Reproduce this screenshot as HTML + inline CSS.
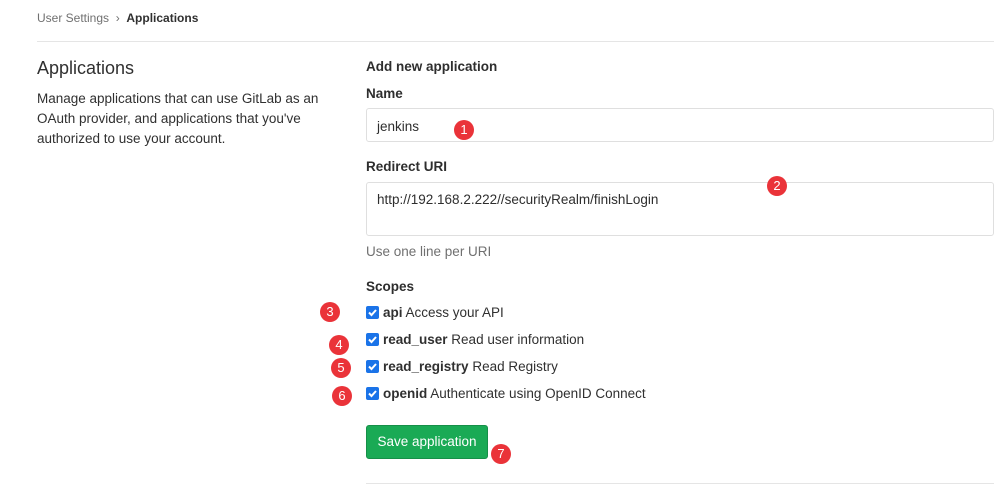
<!DOCTYPE html>
<html><head><style>
body{margin:0;width:1001px;height:497px;background:#fff;font-family:"Liberation Sans",sans-serif;color:#2e2e2e;position:relative;overflow:hidden}
.a{position:absolute;white-space:nowrap}
.b{position:absolute;width:20px;height:20px;border-radius:50%;background:#ea3339;color:#fff;font-size:13px;text-align:center;line-height:20px}
.cb{position:absolute;left:366px;width:13px;height:13px;background:#1a73e8;border-radius:2px}
.cb svg{position:absolute;left:0;top:0}
.l{position:absolute;left:383px;font-size:13.5px;color:#303030}
.in{position:absolute;left:366px;width:628px;border:1px solid #dfdfdf;border-radius:3px;box-sizing:border-box}
</style></head><body>
<div class="a" style="left:37px;top:11px;font-size:12px;color:#707070">User Settings &nbsp;›&nbsp; <b style="color:#303030">Applications</b></div>
<div class="a" style="left:37px;top:41px;width:957px;height:1px;background:#e5e5e5"></div>
<div class="a" style="left:37px;top:58px;font-size:18px;color:#303030">Applications</div>
<div class="a" style="left:37px;top:89px;font-size:13.5px;line-height:20px;color:#303030;white-space:normal;width:300px">Manage applications that can use GitLab as an OAuth provider, and applications that you've authorized to use your account.</div>
<div class="a" style="left:366px;top:59px;font-size:13.5px;font-weight:bold">Add new application</div>
<div class="a" style="left:366px;top:86px;font-size:13.5px;font-weight:bold">Name</div>
<div class="in" style="top:108px;height:34px"></div>
<div class="a" style="left:377px;top:119px;font-size:13.5px">jenkins</div>
<div class="a" style="left:366px;top:159px;font-size:13.5px;font-weight:bold">Redirect URI</div>
<div class="in" style="top:182px;height:54px"></div>
<div class="a" style="left:377px;top:192px;font-size:13.5px">http://192.168.2.222//securityRealm/finishLogin</div>
<div class="a" style="left:366px;top:244px;font-size:13.5px;color:#707070">Use one line per URI</div>
<div class="a" style="left:366px;top:279px;font-size:13.5px;font-weight:bold">Scopes</div>
<div class="cb" style="top:306px"><svg width="13" height="13"><path d="M3 6.5l2.5 2.5 4.5-5" stroke="#fff" stroke-width="2" fill="none"/></svg></div>
<div class="l" style="top:305px"><b>api</b> Access your API</div>
<div class="cb" style="top:333px"><svg width="13" height="13"><path d="M3 6.5l2.5 2.5 4.5-5" stroke="#fff" stroke-width="2" fill="none"/></svg></div>
<div class="l" style="top:332px"><b>read_user</b> Read user information</div>
<div class="cb" style="top:360px"><svg width="13" height="13"><path d="M3 6.5l2.5 2.5 4.5-5" stroke="#fff" stroke-width="2" fill="none"/></svg></div>
<div class="l" style="top:359px"><b>read_registry</b> Read Registry</div>
<div class="cb" style="top:387px"><svg width="13" height="13"><path d="M3 6.5l2.5 2.5 4.5-5" stroke="#fff" stroke-width="2" fill="none"/></svg></div>
<div class="l" style="top:386px"><b>openid</b> Authenticate using OpenID Connect</div>
<div class="a" style="left:366px;top:425px;width:122px;height:34px;background:#1aaa55;border:1px solid #168f48;border-radius:3px;box-sizing:border-box;color:#fff;font-size:13.5px;text-align:center;line-height:32px">Save application</div>
<div class="a" style="left:366px;top:483px;width:628px;height:1px;background:#e5e5e5"></div>
<div class="b" style="left:454px;top:120px">1</div>
<div class="b" style="left:767px;top:176px">2</div>
<div class="b" style="left:320px;top:302px">3</div>
<div class="b" style="left:329px;top:335px">4</div>
<div class="b" style="left:331px;top:358px">5</div>
<div class="b" style="left:332px;top:386px">6</div>
<div class="b" style="left:491px;top:444px">7</div>
</body></html>
